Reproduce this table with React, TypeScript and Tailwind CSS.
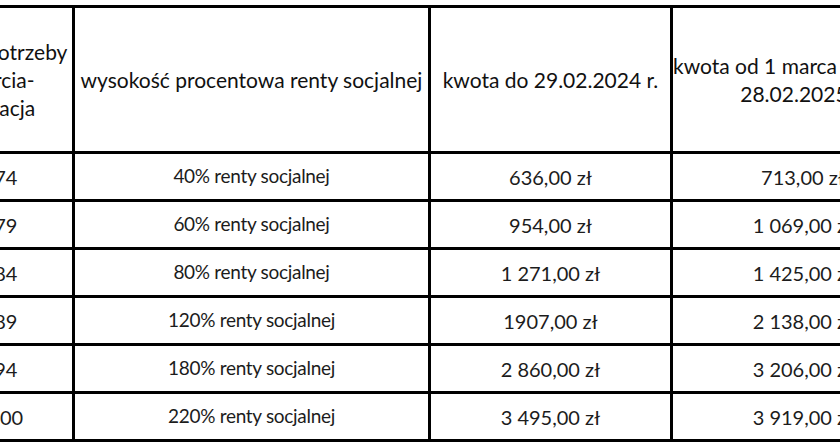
import React from "react";

const rows = [
  { pts: "70-74", pct: "40% renty socjalnej", before: "636,00 zł", after: "713,00 zł" },
  { pts: "75-79", pct: "60% renty socjalnej", before: "954,00 zł", after: "1 069,00 zł" },
  { pts: "80-84", pct: "80% renty socjalnej", before: "1 271,00 zł", after: "1 425,00 zł" },
  { pts: "85-89", pct: "120% renty socjalnej", before: "1907,00 zł", after: "2 138,00 zł" },
  { pts: "90-94", pct: "180% renty socjalnej", before: "2 860,00 zł", after: "3 206,00 zł" },
  { pts: "95-100", pct: "220% renty socjalnej", before: "3 495,00 zł", after: "3 919,00 zł" },
];

export default function App() {
  return (
    <div className="w-[840px] h-[445px] overflow-hidden bg-white font-['Lato','Liberation_Sans',sans-serif] text-[#111]">
      <table className="ml-[-94px] mt-[5px] border-collapse table-fixed w-[1026px]">
        <colgroup>
          <col className="w-[166px]" />
          <col className="w-[356px]" />
          <col className="w-[242px]" />
          <col className="w-[262px]" />
        </colgroup>
        <thead>
          <tr className="h-[146px] text-[21px] leading-[28px]">
            <th className="border-[3px] border-black font-normal whitespace-nowrap">
              poziom potrzeby
              <br />
              wsparcia-
              <br />
              punktacja
            </th>
            <th className="border-[3px] border-black font-normal whitespace-nowrap">
              wysokość procentowa renty socjalnej
            </th>
            <th className="border-[3px] border-black font-normal whitespace-nowrap">
              kwota do 29.02.2024 r.
            </th>
            <th className="border-[3px] border-black font-normal whitespace-nowrap">
              kwota od 1 marca 2024 r. do
              <br />
              28.02.2025 r.
            </th>
          </tr>
        </thead>
        <tbody>
          {rows.map((r) => (
            <tr key={r.pts} className="h-[48px] text-[20px] text-[#1c1c1c]">
              <td className="border-[3px] border-black text-center">{r.pts}</td>
              <td className="border-[3px] border-black text-center text-[19px] tracking-[-0.3px]">{r.pct}</td>
              <td className="border-[3px] border-black text-center">{r.before}</td>
              <td className="border-[3px] border-black text-center">{r.after}</td>
            </tr>
          ))}
        </tbody>
      </table>
    </div>
  );
}
